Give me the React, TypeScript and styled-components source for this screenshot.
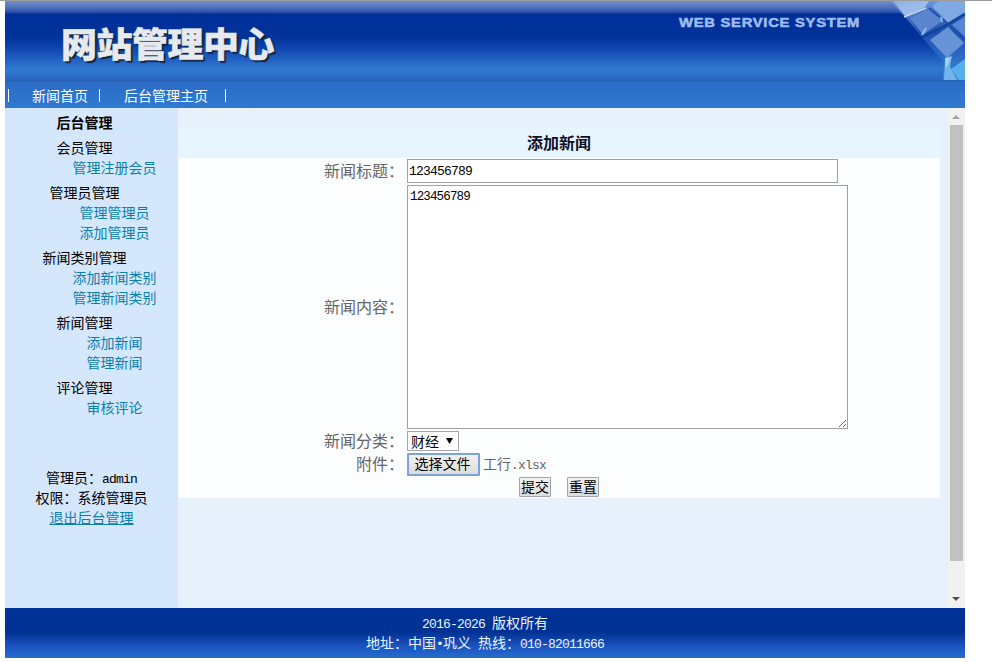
import React from "react";
import styled, { createGlobalStyle } from "styled-components";

const Global = createGlobalStyle`
  * { box-sizing: border-box; }
  body { margin: 0; background: #fff; font: 14px/20px "Noto Sans CJK SC", sans-serif; color: #000; overflow: hidden; }
  a { color: inherit; text-decoration: none; }
`;

const Screen = styled.div`
  height: 662px;
  border-top: 1px solid #9b9b9b;
  padding-left: 5px;
`;
const Page = styled.div`
  width: 960px;
  display: flex;
  flex-direction: column;
`;
const Banner = styled.header`
  height: 79px;
  display: flex;
  position: relative;
  background: linear-gradient(#7090ca 0, #5275bd 6px, #2d52ab 11px, #002f99 13px, #003399 36px, #0d42ac 46px, #2465c4 60px, #3079d2 68px, #2b6dc7 75px, #2866bd 79px);
`;
const Logo = styled.h1`
  margin: 17px 0 0 56px;
  width: 216px;
  font-size: 36px;
  font-weight: 900;
  line-height: 46px;
  letter-spacing: -0.5px;
  white-space: nowrap;
  color: #e6eaef;
  -webkit-text-stroke: 0.5px #e6eaef;
  text-shadow: 2px 2px 1px #13243f;
  transform: scaleY(0.96);
`;
const Slogan = styled.div`
  margin: 12px 0 0 402px;
  height: 20px;
  font: bold 12px/20px "Liberation Sans", sans-serif;
  letter-spacing: 0.6px;
  white-space: nowrap;
  color: #9dbcf2;
  -webkit-text-stroke: 0.5px #9dbcf2;
  transform: scaleX(1.23);
  transform-origin: 0 50%;
`;
const Crystals = styled.svg`
  position: absolute;
  right: 0;
  top: 0;
`;
const Nav = styled.nav`
  height: 28px;
  padding-top: 5px;
  display: flex;
  color: #fff;
  border-top: 1px solid #2560b5;
  background: linear-gradient(#2a6ac3, #2f7ad3);
`;
const NavLink = styled.a`
  margin: -1px 0 0;
`;
const Bar = styled.i<{ $before: number; $after: number }>`
  width: 1px;
  height: 13px;
  margin: 3px ${p => p.$after}px 0 ${p => p.$before}px;
  background: #fff;
`;
const Body = styled.div`
  height: 500px;
  display: flex;
`;
const Sidebar = styled.aside`
  width: 173px;
  padding-top: 4px;
  background: #d5e7fc;
  text-align: center;
`;
const GroupTitle = styled.div<{ $bold?: boolean }>`
  padding-right: 14px;
  font-weight: ${p => (p.$bold ? 700 : 400)};
`;
const Group = styled.section`
  margin-top: 5px;
`;
const SideLink = styled.a`
  display: block;
  padding-left: 46px;
  color: #0b7fa8;
`;
const Line = styled.div`
  height: 20px;
`;
const Account = styled.div`
  margin-top: 50px;
  a { color: #0b7fa8; text-decoration: underline; }
`;
const Mono = styled.span`
  font-family: "Liberation Mono", monospace;
  font-size: 13px;
  line-height: 1;
  letter-spacing: -0.8px;
`;
const Main = styled.main`
  width: 770px;
  padding: 20px 8px 0 0;
  background: #e7f1fc;
`;
const PanelTitle = styled.h2`
  margin: 0;
  height: 30px;
  font-size: 16px;
  line-height: 28px;
  text-align: center;
  background: #e6f5ff;
  color: #101028;
`;
const Form = styled.form`
  height: 340px;
  background: #fcfdff;
`;
const Field = styled.div<{ $h: number }>`
  height: ${p => p.$h}px;
  display: flex;
  align-items: center;
  color: #666;
`;
const Label = styled.label`
  width: 226px;
  margin-right: 3px;
  padding-bottom: 2px;
  text-align: right;
  font-size: 16px;
`;
const TitleInput = styled.input`
  width: 431px;
  height: 24px;
  padding: 2px 1px 1px;
  border: 1px solid #a0a0a0;
  outline: 0;
  font: 13px "Liberation Mono", monospace;
  letter-spacing: -0.8px;
`;
const Content = styled.textarea`
  width: 441px;
  height: 244px;
  padding: 4px 2px 2px;
  border: 1px solid #a0a0a0;
  outline: 0;
  display: block;
  font: 12.5px/15px "Liberation Mono", monospace;
  letter-spacing: -0.85px;
`;
const Picker = styled.button`
  width: 52px;
  height: 20px;
  padding: 0 5px 0 3px;
  border: 1px solid #a6a6a6;
  background: #fff;
  color: #000;
  display: flex;
  align-items: center;
  justify-content: space-between;
  font: 14px/16px "Noto Sans CJK SC", sans-serif;
`;
const Button = styled.button<{ $file?: boolean }>`
  width: ${p => (p.$file ? 73 : 32)}px;
  height: ${p => (p.$file ? 23 : 20)}px;
  padding: 0 ${p => (p.$file ? 2 : 0)}px 2px 0;
  border: ${p => (p.$file ? "2px solid #7da2dc" : "1px solid #a3a3a3")};
  border-radius: 1px;
  background: linear-gradient(#f2f2f2, #dcdcdc);
  color: #000;
  white-space: nowrap;
  font: 14px/16px "Noto Sans CJK SC", sans-serif;
`;
const FileName = styled.span`
  height: 20px;
  margin: -2px 0 0 3px;
`;
const Actions = styled.div`
  height: 22px;
  padding-left: 341px;
  display: flex;
  align-items: center;
  gap: 16px;
`;
const Scrollbar = styled.div`
  width: 17px;
  padding: 7px 3px 7px 2px;
  background: #f1f1f1;
  display: flex;
  flex-direction: column;
  align-items: center;
`;
const Thumb = styled.div`
  width: 13px;
  height: 436px;
  margin: 6px 0 auto;
  background: #c1c1c1;
`;
const Arrow = styled.svg`
  display: block;
  flex: none;
`;
const Footer = styled.footer`
  height: 50px;
  padding-top: 4px;
  text-align: center;
  color: #e8f6ff;
  white-space: pre;
  background: linear-gradient(#003399 0, #003192 24px, #0b3da2 29px, #1a51bb 37px, #205fcc 44px, #2a70bd 50px);
`;

const groups: [string, string[]][] = [
  ["会员管理", ["管理注册会员"]],
  ["管理员管理", ["管理管理员", "添加管理员"]],
  ["新闻类别管理", ["添加新闻类别", "管理新闻类别"]],
  ["新闻管理", ["添加新闻", "管理新闻"]],
  ["评论管理", ["审核评论"]],
];

export default function App() {
  return (
    <Screen>
      <Global />
      <Page>
        <Banner>
          <Logo>网站管理中心</Logo>
          <Slogan>WEB SERVICE SYSTEM</Slogan>
          <Crystals width="80" height="79" viewBox="0 0 80 79">
            <defs>
              <linearGradient id="base" x1="0" y1="0" x2="0" y2="1">
                <stop offset="0" stopColor="#6d94d6" />
                <stop offset="0.4" stopColor="#1d50b0" />
                <stop offset="1" stopColor="#3a86d8" />
              </linearGradient>
              <linearGradient id="pale" x1="0" y1="0" x2="1" y2="1">
                <stop offset="0" stopColor="#8fb0e4" />
                <stop offset="1" stopColor="#a9c6ef" />
              </linearGradient>
            </defs>
            <path d="M5 0H80V79H58V60L42 42L36 35L20 16Z" fill="url(#base)" />
            <path d="M8 0H44L40 6L20 15Z" fill="url(#pale)" />
            <path d="M25 17L42 9L58 19L38 34Z" fill="#5a84cd" />
            <path d="M47 5L54 0H80V13L63 22Z" fill="#7fa9e3" />
            <path d="M45 39L63 26L79 42L62 57Z" fill="#6793d7" />
            <path d="M67 24L80 16V36Z" fill="#5685d2" />
            <path d="M37 36L62 24L80 13" stroke="#0f459f" strokeWidth="3" fill="none" />
            <path d="M44 7L62 22L80 39" stroke="#1a50aa" strokeWidth="2" fill="none" />
            <path d="M19 16L41 7" stroke="#c4dcf8" strokeWidth="1.5" fill="none" />
            <path d="M37 34L41 27M56 16L57 21" stroke="#8fbcf0" strokeWidth="2" fill="none" />
            <path d="M60 57L67 55L65 66L72 79H59Z" fill="#72b3ea" />
            <path d="M60 57L66 56L61 68Z" fill="#a5d4f6" />
            <path d="M66 68L80 58V79H74Z" fill="#58b0ea" />
          </Crystals>
        </Banner>
        <Nav>
          <Bar $before={3} $after={23} />
          <NavLink href="#">新闻首页</NavLink>
          <Bar $before={11} $after={24} />
          <NavLink href="#">后台管理主页</NavLink>
          <Bar $before={17} $after={0} />
        </Nav>
        <Body>
          <Sidebar>
            <GroupTitle $bold>后台管理</GroupTitle>
            {groups.map(([title, links]) => (
              <Group key={title}>
                <GroupTitle>{title}</GroupTitle>
                {links.map(l => <SideLink href="#" key={l}>{l}</SideLink>)}
              </Group>
            ))}
            <Account>
              <Line>管理员：<Mono>admin</Mono></Line>
              <Line>权限：系统管理员</Line>
              <Line><a href="#">退出后台管理</a></Line>
            </Account>
          </Sidebar>
          <Main>
            <PanelTitle>添加新闻</PanelTitle>
            <Form>
              <Field $h={26}><Label>新闻标题：</Label><TitleInput defaultValue="123456789" /></Field>
              <Field $h={246}><Label>新闻内容：</Label><Content defaultValue="123456789" spellCheck={false} /></Field>
              <Field $h={22}>
                <Label>新闻分类：</Label>
                <Picker type="button">
                  财经
                  <Arrow width="7" height="6" viewBox="0 0 7 6"><path d="M0 0H7L3.5 6Z" fill="#000" /></Arrow>
                </Picker>
              </Field>
              <Field $h={24}>
                <Label>附件：</Label>
                <Button type="button" $file>选择文件</Button>
                <FileName>工行<Mono>.xlsx</Mono></FileName>
              </Field>
              <Actions>
                <Button type="button">提交</Button>
                <Button type="button">重置</Button>
              </Actions>
            </Form>
          </Main>
          <Scrollbar>
            <Arrow width="8" height="4" viewBox="0 0 8 4"><path d="M4 0L8 4H0Z" fill="#a3a3a3" /></Arrow>
            <Thumb />
            <Arrow width="8" height="4" viewBox="0 0 8 4"><path d="M0 0H8L4 4Z" fill="#505050" /></Arrow>
          </Scrollbar>
        </Body>
        <Footer>
          <Line><Mono>2016-2026 </Mono>版权所有</Line>
          <Line>地址：中国<Mono>•</Mono>巩义<Mono> </Mono>热线：<Mono>010-82011666</Mono></Line>
        </Footer>
      </Page>
    </Screen>
  );
}
